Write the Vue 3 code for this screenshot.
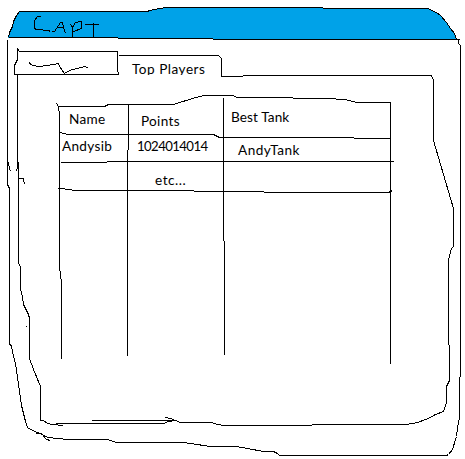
<script setup>
const outlines = [
  // window frame
  '8,37 9,32 12,26 13,21 16,15 19,11 147,11 149,10 154,9 165,7 322,7 323,8 427,8 436,12 440,15 446,22 450,28 454,33 456,39',
  '8,37 117,37 118,38 212,38 213,39 459,39',
  '458,39 458,43 460,45 460,376 459,377 459,417 457,427 456,436 452,449 448,454 446,455 279,455 277,453 273,451 263,451 247,448 236,446 210,446 190,443 182,442 116,442 107,439 67,439 57,438 47,437 42,434 32,430 27,427 25,421 21,405 19,391 17,377 15,363 12,352 11,345 9,344 9,188 7,184 7,39',
  '35,433 41,433 46,439 50,440',
  '8,162 9,168 10,171',
  // tabs
  '17,48 17,59 14,65 14,74 118,74 117,69 117,51 19,51 17,48',
  '118,55 218,55 221,58 221,76 242,76 243,75 431,75 433,80 433,140 453,208 453,246 451,248 448,259 448,344 449,345 449,380 446,386 446,402 443,411 435,414 428,418 417,422 406,424 312,424 311,425 224,425 217,424 211,422 180,422 175,420 170,418 165,417',
  // page frame
  '17,74 17,166 16,171',
  '18,161 18,263 20,266 20,288 22,297 23,304 26,310 28,314 29,318 29,358 33,369 40,386 40,420 43,420 47,423 52,424 63,425',
  '18,178 23,178 24,184',
  '55,423 163,423 168,421 175,420 91,420',
  '26,325 26,326',
  // table
  '56,103 58,106 59,115 59,270 60,271 60,278 61,279 61,358',
  '58,106 104,106 108,104 173,104 195,97 204,95 232,95 237,97 292,97 293,98 325,98 345,99 356,102 390,102 390,363',
  '128,104 128,149 127,150 127,355',
  '223,97 223,240 224,241 224,354',
  '60,132 67,134 213,134 219,137 353,137 354,138 390,138',
  '60,162 106,162 107,161 393,161',
  '58,188 71,189 72,190 193,190 194,191 263,191 264,192 388,192 392,190',
  // hand-drawn title
  '40,16 37,16 34,20 34,28 36,29 48,30 50,31',
  '51,31 54,31 60,22 62,22 63,27 65,33',
  '57,27 63,27',
  '70,24 72,27 72,37',
  '72,27 75,22 81,21 81,28 73,31',
  '84,24 98,24',
  '93,22 93,37',
  // first tab scribble
  '29,62 30,64 37,66 39,66 47,65 58,63 59,66 64,73 69,70 76,68 85,66 88,68',
]
const fill = '8,37 9,32 12,26 13,21 16,15 19,11 147,11 149,10 154,9 165,7 322,7 323,8 427,8 436,12 440,15 446,22 450,28 454,33 456,39 213,39 212,38 118,38 117,37'
</script>

<template>
  <main class="window">
    <svg class="sketch" viewBox="0 0 465 459" aria-hidden="true">
      <g transform="translate(.5 .5)">
        <polygon :points="fill" class="bar" />
        <polyline v-for="(points, i) in outlines" :key="i" :points="points" />
      </g>
    </svg>
    <nav class="tabs"><span class="tab">Top Players</span></nav>
    <section class="table">
      <span class="cell name-head">Name</span>
      <span class="cell points-head">Points</span>
      <span class="cell tank-head">Best Tank</span>
      <span class="cell name">Andysib</span>
      <span class="cell points">1024014014</span>
      <span class="cell tank">AndyTank</span>
      <span class="cell"></span>
      <span class="cell more">etc...</span>
      <span class="cell"></span>
    </section>
  </main>
</template>

<style>
body { background: #fff; }
</style>

<style scoped>
.window {
  position: relative;
  width: 465px;
  height: 459px;
  overflow: hidden;
  font: 13.6px/18px Lato, "Liberation Sans", sans-serif;
  letter-spacing: .3px;
  color: #000;
}
.sketch {
  position: absolute;
  inset: 0;
  width: 465px;
  height: 459px;
  shape-rendering: crispEdges;
}
.sketch polyline { fill: none; stroke: #000; stroke-width: 1; }
.bar { fill: #00a2e8; }
.tabs {
  position: relative;
  display: flex;
  height: 75px;
  padding: 60px 0 0 132px;
  box-sizing: border-box;
  overflow: hidden;
}
.tab { letter-spacing: .5px; }
.table {
  position: relative;
  display: grid;
  grid-template-columns: 68px 96px 167px;
  grid-template-rows: 31px 27px 31px;
  padding: 30px 0 0 60px;
}
.cell { white-space: nowrap; }
.name-head { padding: 5px 0 0 9px; }
.points-head { padding: 7px 0 0 13px; }
.tank-head { padding: 3px 0 0 7px; letter-spacing: .1px; }
.name { padding: 1px 0 0 2px; }
.points { padding: 1px 0 0 9px; font-size: 13.2px; letter-spacing: -.6px; }
.tank { padding: 5px 0 0 14px; letter-spacing: .5px; }
.more { padding: 8px 0 0 27px; letter-spacing: .5px; }
</style>
